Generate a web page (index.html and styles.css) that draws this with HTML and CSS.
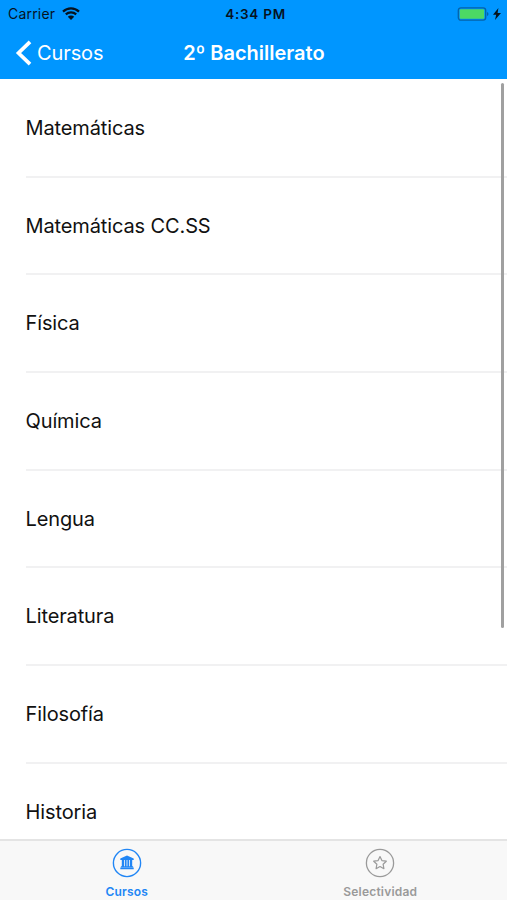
FILE: index.html
```html
<!DOCTYPE html>
<html lang="es">
<head>
<meta charset="utf-8">
<title>2º Bachillerato</title>
<link rel="stylesheet" href="styles.css">
</head>
<body>
<div class="app">
  <header class="header">
    <div class="status">
      <div class="status-left">
        <span class="carrier">Carrier</span>
        <svg class="wifi" width="18" height="13" viewBox="0 0 18 13">
          <path d="M1 4.600a11.600 11.600 0 0 1 16 0M3.800 7.400a7.600 7.600 0 0 1 10.400 0" fill="none" stroke="currentColor" stroke-width="2.200"/>
          <path d="M9 13 5.800 9.700a4.600 4.600 0 0 1 6.400 0z" fill="currentColor"/>
        </svg>
      </div>
      <span class="time">4:34 PM</span>
      <div class="status-right">
        <svg width="32" height="14" viewBox="0 0 32 14">
          <rect x="1.300" y=".8" width="27.400" height="12.400" rx="2.600" fill="none" stroke="#0563a9" stroke-width="1.300"/>
          <rect x="2.800" y="2.200" width="24.400" height="9.600" rx="1" fill="#4cd964"/>
          <path d="M30 5q1.500.5 1.500 2T30 9z" fill="#0563a9"/>
        </svg>
        <svg width="8" height="12" viewBox="0 0 8 12"><path d="M5.400 0 0 6.700h3.200L2 12l6-7H4.600z" fill="#06131f"/></svg>
      </div>
    </div>
    <nav class="navbar">
      <a class="back">
        <svg width="17" height="26" viewBox="0 0 17 26"><path d="M15 1.800 3.500 13 15 24.200" fill="none" stroke="#fff" stroke-width="3.700"/></svg>
        <span>Cursos</span>
      </a>
      <h1 class="title">2º Bachillerato</h1>
    </nav>
  </header>
  <main class="content">
    <ul class="list">
      <li>Matemáticas</li>
      <li>Matemáticas CC.SS</li>
      <li>Física</li>
      <li>Química</li>
      <li>Lengua</li>
      <li>Literatura</li>
      <li>Filosofía</li>
      <li>Historia</li>
    </ul>
    <div class="scrollbar"></div>
  </main>
  <footer class="tabs">
    <a class="tab active">
      <svg width="30" height="30" viewBox="0 0 30 30">
        <circle cx="15" cy="15" r="13.600" fill="none" stroke="currentColor" stroke-width="1.400"/>
        <path d="M15 7.600 21.700 10.500v1.500H8.300v-1.500zM9.800 12h2.300v6.200h.8V12h1.700v6.200h.8V12h1.700v6.200h.8V12h2.300v6.200h.9v1.100H8.900v-1.100h.9zM8.300 19.600h13.400v1.700H8.300z" fill="currentColor"/>
      </svg>
      <span>Cursos</span>
    </a>
    <a class="tab">
      <svg width="30" height="30" viewBox="0 0 30 30">
        <circle cx="15" cy="15" r="13.600" fill="none" stroke="currentColor" stroke-width="1.300"/>
        <path d="m15 8.500 1.900 4.100 4.400.6-3.200 3 .8 4.500-3.900-2.200-3.900 2.200.8-4.500-3.200-3 4.400-.6z" fill="none" stroke="currentColor" stroke-width="1.200" stroke-linejoin="round"/>
      </svg>
      <span>Selectividad</span>
    </a>
  </footer>
</div>
</body>
</html>
```
FILE: styles.css
```css
* { box-sizing: border-box; }
body {
  margin: 0;
  font-family: Inter, "Liberation Sans", sans-serif;
  color: #111;
  background: #fff;
}
.app {
  height: 900px;
  display: flex;
  flex-direction: column;
  overflow: hidden;
}
.header {
  height: 79px;
  flex: none;
  background: #0096ff;
}
.status {
  height: 27px;
  padding: 0 6px 0 8px;
  display: grid;
  grid-template-columns: 1fr auto 1fr;
  align-items: center;
  color: #06131f;
}
.status-left, .status-right { display: flex; align-items: center; }
.status-left { gap: 7px; }
.status-right { justify-content: flex-end; gap: 4px; }
.carrier { font-size: 14px; letter-spacing: .2px; }
.time { font-size: 13.500px; font-weight: 600; letter-spacing: .75px; padding-left: 2px; }
.navbar {
  height: 51px;
  padding: 0 14px 0 15px;
  display: grid;
  grid-template-columns: 1fr auto 1fr;
  align-items: center;
  color: #fff;
}
.back {
  display: flex;
  align-items: center;
  gap: 5px;
  font-size: 20px;
  letter-spacing: -.1px;
}
.title {
  margin: 0;
  font-size: 20px;
  font-weight: 600;
}
.content {
  flex: 1;
  min-height: 0;
  position: relative;
  overflow: hidden;
}
.list { list-style: none; margin: 0; padding: 1px 0 0 25.500px; }
.list li {
  height: 97.700px;
  display: flex;
  align-items: center;
  font-size: 20px;
  letter-spacing: -.12px;
  border-bottom: 2px solid #f1f1f2;
}
.scrollbar {
  position: absolute;
  top: 4px;
  right: 3.500px;
  width: 3px;
  height: 545px;
  border-radius: 2px;
  background: #a0a0a0;
}
.tabs {
  flex: none;
  height: 61px;
  display: grid;
  grid-template-columns: 1fr 1fr;
  background: #f8f8f8;
  border-top: 2px solid #e4e4e4;
}
.tab {
  display: flex;
  flex-direction: column;
  align-items: center;
  padding-top: 7px;
  gap: 6px;
  font-size: 12px;
  line-height: 15px;
  font-weight: 600;
  letter-spacing: .2px;
  color: #9a9a9a;
}
.active { color: #2186f5; }
```
